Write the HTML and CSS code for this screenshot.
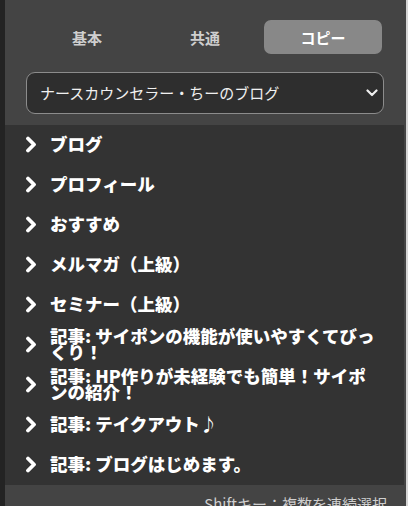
FILE: index.html
```html
<!DOCTYPE html>
<html lang="ja">
<head>
<meta charset="utf-8">
<link rel="stylesheet" href="styles.css">
</head>
<body>
<div class="frame">
  <div class="strip"></div>
  <div class="panel">
    <div class="tabs">
      <div class="tab">基本</div>
      <div class="tab">共通</div>
      <div class="tab active">コピー</div>
    </div>
    <div class="select">
      <span class="select-text">ナースカウンセラー・ちーのブログ</span>
      <svg class="select-chev" width="12" height="8" viewBox="0 0 12 8"><polyline points="1.5,1.5 6,6 10.5,1.5" fill="none" stroke="#eee" stroke-width="2.2" stroke-linecap="round" stroke-linejoin="round"/></svg>
    </div>
    <ul class="list">
      <li class="item"><svg class="chev" width="12" height="17" viewBox="0 0 12 17"><polyline points="3,2.5 9,8.5 3,14.5" fill="none" stroke="#fff" stroke-width="3.8" stroke-linecap="round" stroke-linejoin="round"/></svg><span class="label">ブログ</span></li>
      <li class="item"><svg class="chev" width="12" height="17" viewBox="0 0 12 17"><polyline points="3,2.5 9,8.5 3,14.5" fill="none" stroke="#fff" stroke-width="3.8" stroke-linecap="round" stroke-linejoin="round"/></svg><span class="label">プロフィール</span></li>
      <li class="item"><svg class="chev" width="12" height="17" viewBox="0 0 12 17"><polyline points="3,2.5 9,8.5 3,14.5" fill="none" stroke="#fff" stroke-width="3.8" stroke-linecap="round" stroke-linejoin="round"/></svg><span class="label">おすすめ</span></li>
      <li class="item"><svg class="chev" width="12" height="17" viewBox="0 0 12 17"><polyline points="3,2.5 9,8.5 3,14.5" fill="none" stroke="#fff" stroke-width="3.8" stroke-linecap="round" stroke-linejoin="round"/></svg><span class="label">メルマガ（上級）</span></li>
      <li class="item"><svg class="chev" width="12" height="17" viewBox="0 0 12 17"><polyline points="3,2.5 9,8.5 3,14.5" fill="none" stroke="#fff" stroke-width="3.8" stroke-linecap="round" stroke-linejoin="round"/></svg><span class="label">セミナー（上級）</span></li>
      <li class="item"><svg class="chev" width="12" height="17" viewBox="0 0 12 17"><polyline points="3,2.5 9,8.5 3,14.5" fill="none" stroke="#fff" stroke-width="3.8" stroke-linecap="round" stroke-linejoin="round"/></svg><span class="label">記事: サイポンの機能が使いやすくてびっくり！</span></li>
      <li class="item"><svg class="chev" width="12" height="17" viewBox="0 0 12 17"><polyline points="3,2.5 9,8.5 3,14.5" fill="none" stroke="#fff" stroke-width="3.8" stroke-linecap="round" stroke-linejoin="round"/></svg><span class="label">記事: HP作りが未経験でも簡単！サイポンの紹介！</span></li>
      <li class="item"><svg class="chev" width="12" height="17" viewBox="0 0 12 17"><polyline points="3,2.5 9,8.5 3,14.5" fill="none" stroke="#fff" stroke-width="3.8" stroke-linecap="round" stroke-linejoin="round"/></svg><span class="label">記事: テイクアウト♪</span></li>
      <li class="item"><svg class="chev" width="12" height="17" viewBox="0 0 12 17"><polyline points="3,2.5 9,8.5 3,14.5" fill="none" stroke="#fff" stroke-width="3.8" stroke-linecap="round" stroke-linejoin="round"/></svg><span class="label">記事: ブログはじめます。</span></li>
    </ul>
    <div class="footer">Shiftキー：複数を連続選択</div>
  </div>
  <div class="edge"></div>
</div>
</body>
</html>
```
FILE: styles.css
```css
* { box-sizing: border-box; }
html, body {
  margin: 0;
  padding: 0;
  width: 408px;
  height: 506px;
  overflow: hidden;
  background: #444;
  font-family: "Noto Sans CJK JP", "Noto Sans", sans-serif;
}
.frame {
  display: flex;
  width: 408px;
  height: 506px;
}
.strip {
  width: 5px;
  flex: none;
  background: #232323;
}
.panel {
  width: 401px;
  flex: none;
  background: #444;
  display: flex;
  flex-direction: column;
}
.edge {
  width: 2px;
  flex: none;
  background: #d6d6d6;
}
.tabs {
  display: flex;
  padding: 20px 0 0 23px;
}
.tab {
  width: 118px;
  height: 34px;
  display: flex;
  align-items: center;
  justify-content: center;
  color: #cfcfcf;
  font-weight: bold;
  font-size: 15px;
  border-radius: 7px;
}
.tab.active {
  background: #888;
  color: #fff;
}
.select {
  margin: 18px 0 0 21px;
  width: 358px;
  height: 42px;
  flex: none;
  border: 1px solid #8c8c8c;
  border-radius: 9px;
  background: #2e2e2e;
  display: flex;
  align-items: center;
  justify-content: space-between;
  padding: 0 5px 0 13px;
}
.select-text {
  color: #f0f0f0;
  font-size: 15px;
  line-height: 20px;
}
.select-chev {
  display: block;
}
.list {
  list-style: none;
  flex: none;
  margin: 11px 2px 0 0;
  padding: 0 23px 0 20px;
  background: #333;
  height: 360px;
}
.item {
  height: 40px;
  display: flex;
  align-items: center;
  gap: 13px;
  padding-bottom: 2px;
}
.chev {
  flex: none;
  display: block;
}
.label {
  color: #fff;
  font-weight: 900;
  font-size: 17.5px;
  line-height: 16px;
}
.footer {
  flex: 1;
  color: #cfcfcf;
  font-size: 15px;
  line-height: 20px;
  text-align: right;
  padding: 9px 19px 0 0;
}
```
